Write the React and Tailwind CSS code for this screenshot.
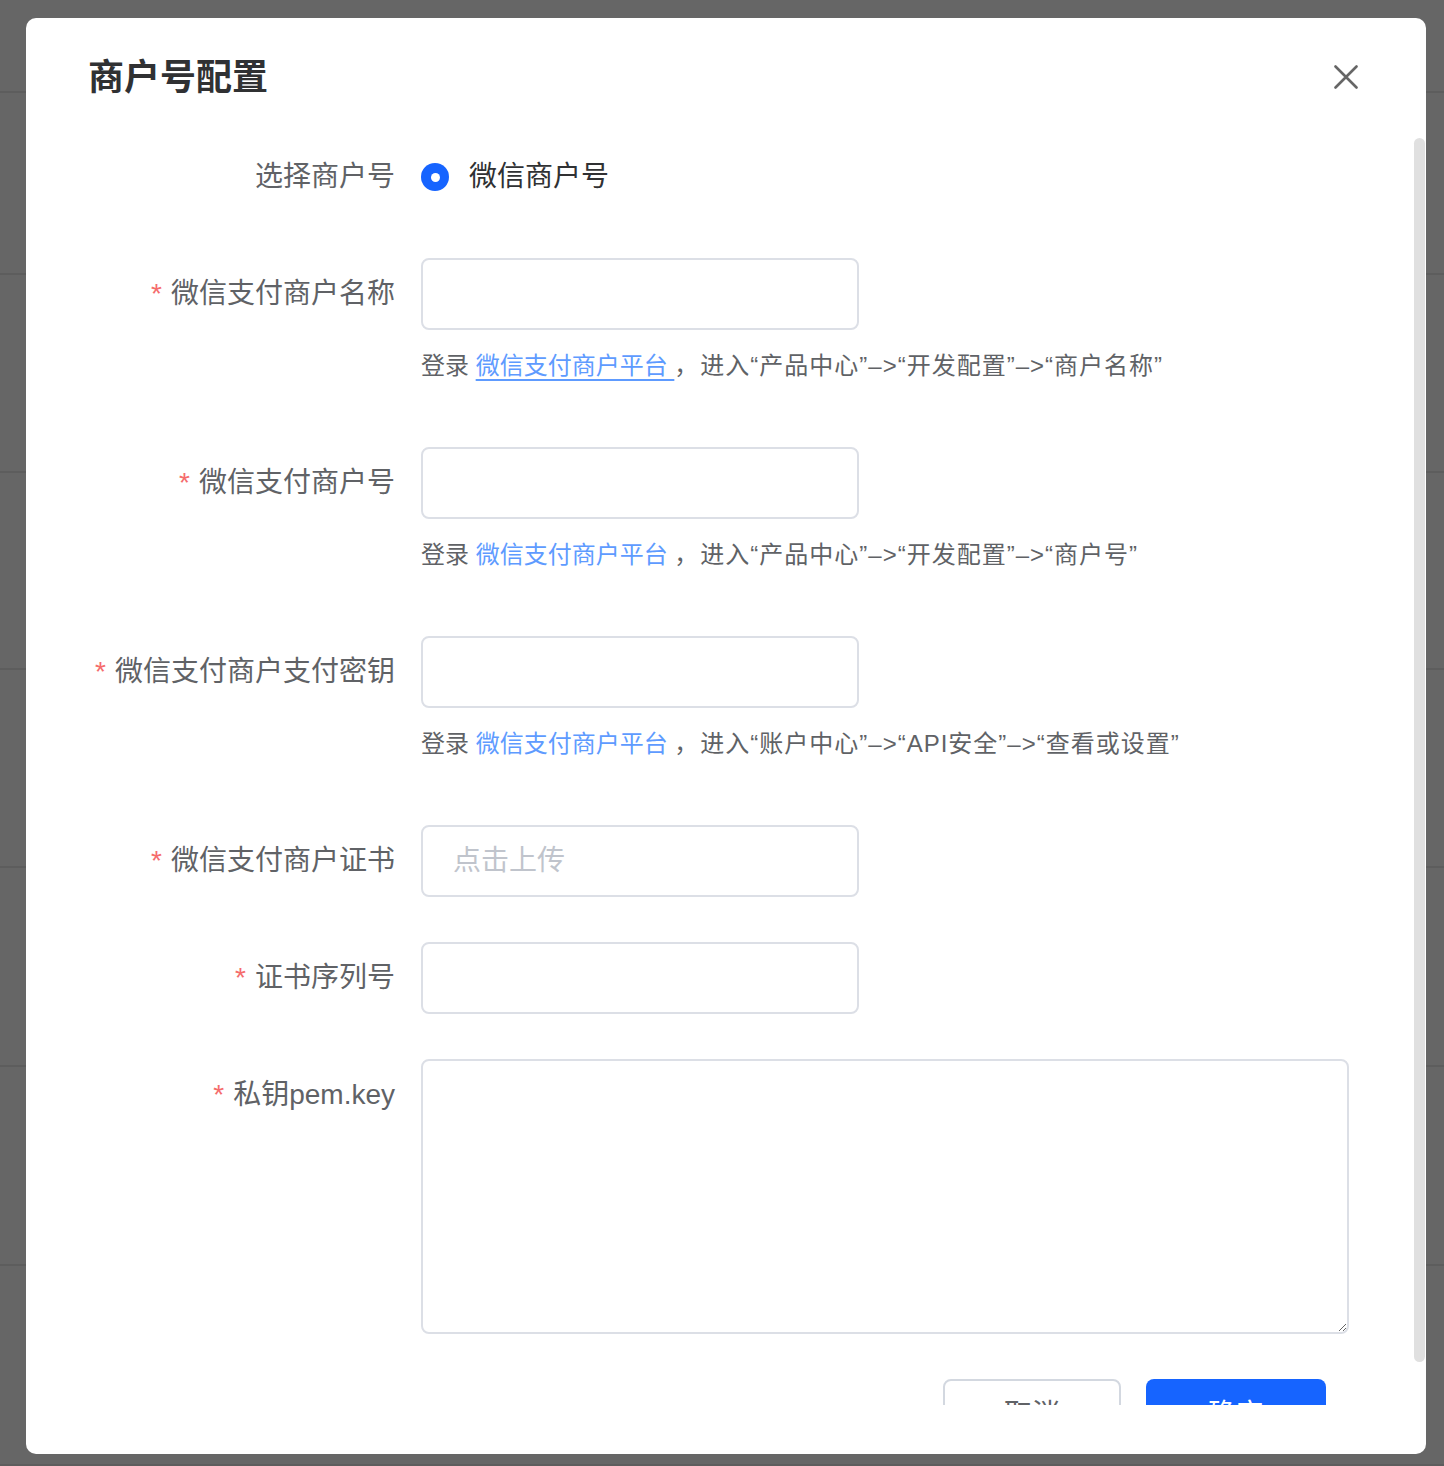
import React from 'react';

const FONT = { fontFamily: '"Liberation Sans", "Noto Sans CJK SC", "Noto Sans", sans-serif' };

const BG_ROWS = [93, 182, 198, 197, 198, 199, 199, 200];

function Label({ required, children }) {
  return (
    <div className="flex h-[72px] w-[307px] shrink-0 items-center justify-end text-[28px] text-[#606266]">
      {required && <span className="mr-[9px] text-[28px] text-[#f56c6c]">*</span>}
      <span>{children}</span>
    </div>
  );
}

function TextInput({ placeholder }) {
  return (
    <input
      className="h-[72px] w-[438px] rounded-[8px] border-2 border-[#dcdfe6] bg-white px-[30px] text-[28px] text-[#606266] outline-none placeholder:text-[#c0c4cc]"
      style={FONT}
      placeholder={placeholder}
    />
  );
}

function Hint({ path, underline }) {
  return (
    <div className="flex h-[72px] items-center whitespace-pre text-[24px] text-[#606266]">
      <span>登录 </span>
      <a className={`text-[#5e9bff] ${underline ? 'underline underline-offset-[5px]' : ''}`}>微信支付商户平台 </a>
      <span>，</span>
      <span className="ml-[2px] tracking-[1px]">{path}</span>
    </div>
  );
}

function Row({ label, required = true, children, hint }) {
  return (
    <div className="flex gap-[26px]">
      <Label required={required}>{label}</Label>
      <div className="flex flex-col">
        {children}
        {hint}
      </div>
    </div>
  );
}

export default function App() {
  return (
    <div className="relative h-[1466px] w-full overflow-hidden bg-[#666666]" style={FONT}>
      {/* page behind the overlay */}
      <div className="flex flex-col">
        {BG_ROWS.map((h, i) => (
          <div key={i} className="border-b-2 border-[#5d5d5d]" style={{ height: h }} />
        ))}
      </div>

      {/* dialog */}
      <div className="absolute left-[26px] top-[18px] h-[1436px] w-[1400px] rounded-[10px] bg-white">
        <div className="flex h-[123px] items-start justify-between pl-[62px] pr-[68px] pt-[40px]">
          <h2 className="text-[36px] font-bold leading-[40px] text-[#303133]">商户号配置</h2>
          <button className="mt-[7px] text-[#666]">
            <svg width="24" height="24" viewBox="0 0 24 24" fill="none" stroke="currentColor" strokeWidth="2.6" strokeLinecap="round">
              <path d="M1.5 1.5L22.5 22.5M22.5 1.5L1.5 22.5" />
            </svg>
          </button>
        </div>

        <div className="h-[1264px] overflow-hidden">
          <div className="flex flex-col gap-[45px] pl-[62px]">
            <Row label="选择商户号" required={false}>
              <div className="flex h-[72px] items-center">
                <span className="flex h-[28px] w-[28px] items-center justify-center rounded-full bg-[#1664ff]">
                  <span className="h-[9px] w-[9px] rounded-full bg-white" />
                </span>
                <span className="ml-[20px] text-[28px] text-[#303133]">微信商户号</span>
              </div>
            </Row>

            <Row label="微信支付商户名称" hint={<Hint underline path="进入“产品中心”–>“开发配置”–>“商户名称”" />}>
              <TextInput />
            </Row>

            <Row label="微信支付商户号" hint={<Hint path="进入“产品中心”–>“开发配置”–>“商户号”" />}>
              <TextInput />
            </Row>

            <Row label="微信支付商户支付密钥" hint={<Hint path="进入“账户中心”–>“API安全”–>“查看或设置”" />}>
              <TextInput />
            </Row>

            <Row label="微信支付商户证书">
              <TextInput placeholder="点击上传" />
            </Row>

            <Row label="证书序列号">
              <TextInput />
            </Row>

            <Row label="私钥pem.key">
              <textarea
                className="h-[275px] w-[928px] rounded-[8px] border-2 border-[#dcdfe6] bg-white p-[20px] text-[28px] text-[#606266] outline-none"
                style={FONT}
              />
            </Row>

            <div className="flex justify-end gap-[25px] pr-[100px]">
              <button className="h-[72px] w-[178px] rounded-[8px] border-2 border-[#d3d8e0] bg-white text-[28px] text-[#606266]">
                取消
              </button>
              <button className="h-[72px] w-[180px] rounded-[8px] bg-[#1664ff] text-[28px] text-white">确定</button>
            </div>
          </div>
        </div>

        {/* scrollbar thumb */}
        <div className="absolute left-[1388px] top-[120px] h-[1224px] w-[11px] rounded-full bg-[#e0e0e0]" />
      </div>
    </div>
  );
}
